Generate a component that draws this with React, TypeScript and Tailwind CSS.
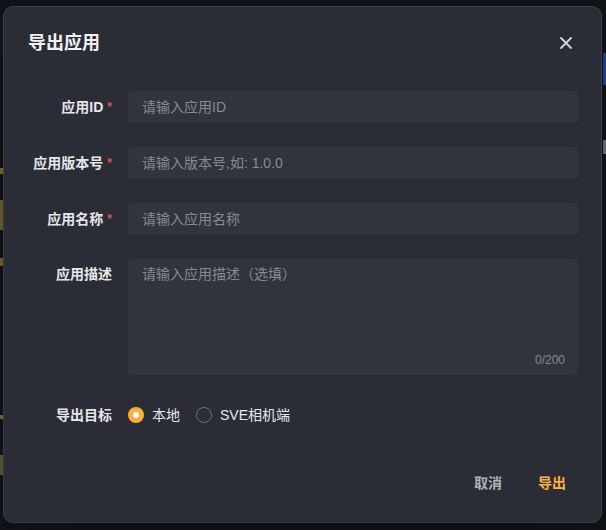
import { useState } from "react";

const font = { fontFamily: '"Liberation Sans", "Noto Sans CJK SC", sans-serif' };

function Label({ text, required }: { text: string; required?: boolean }) {
  return (
    <div className="flex w-[81px] shrink-0 items-start justify-end whitespace-nowrap text-[14px] font-bold leading-[20px] text-[#e6e7ea]">
      <span>{text}</span>
      {required && <span className="ml-[4px] pt-[2px] text-[12px] leading-[16px] text-[#e0524a]">*</span>}
    </div>
  );
}

function Field({ label, placeholder, required }: { label: string; placeholder: string; required?: boolean }) {
  return (
    <div className="flex items-center gap-4">
      <Label text={label} required={required} />
      <input
        placeholder={placeholder}
        className="h-8 w-[450px] rounded-[4px] bg-[#31343c] px-[14px] text-[14px] text-[#e6e7ea] outline-none placeholder:text-[#878a91]"
      />
    </div>
  );
}

function Radio({ checked, label, onClick }: { checked: boolean; label: string; onClick: () => void }) {
  return (
    <button type="button" onClick={onClick} className="flex items-center gap-2">
      {checked ? (
        <span className="grid h-4 w-4 place-items-center rounded-full bg-[#ffb03a]">
          <span className="h-[6px] w-[6px] rounded-full bg-white" />
        </span>
      ) : (
        <span className="h-4 w-4 rounded-full border border-[#6c6f76]" />
      )}
      <span className="text-[14px] leading-[20px] text-[#e6e7ea]">{label}</span>
    </button>
  );
}

export default function App() {
  const [target, setTarget] = useState("local");
  return (
    <div className="relative h-[530px] w-[606px] overflow-hidden bg-[#111317]" style={font}>
      {/* background slivers peeking past the dialog */}
      <div className="absolute left-0 top-[168px] h-[6px] w-[3px] bg-[#8a6420]" />
      <div className="absolute left-0 top-[200px] h-[30px] w-[3px] bg-[#6b5a2a]" />
      <div className="absolute left-0 top-[258px] h-[8px] w-[3px] bg-[#7a5a20]" />
      <div className="absolute left-0 top-[415px] h-[4px] w-[3px] bg-[#8a6420]" />
      <div className="absolute left-0 top-[455px] h-[20px] w-[3px] bg-[#5a5630]" />
      <div className="absolute right-0 top-[53px] h-[32px] w-[3px] bg-[#1e3f8f]" />
      <div className="absolute right-0 top-[140px] h-[14px] w-[3px] bg-[#6a6d72]" />

      <div className="relative ml-[3px] mt-[6px] flex h-[517px] w-[599px] flex-col rounded-[10px] border border-[#3a3e47] bg-[#2a2d35] shadow-2xl">
        <div className="flex items-center justify-between pl-[24px] pr-[29px] pt-[24px]">
          <h2 className="text-[18px] font-bold leading-[24px] text-[#f0f1f3]">导出应用</h2>
          <button type="button" aria-label="关闭" className="text-[#d4d5d8]">
            <svg width="12" height="12" viewBox="0 0 12 12" fill="none" stroke="currentColor" strokeWidth="1.8" strokeLinecap="round">
              <path d="M1 1l10 10M11 1L1 11" />
            </svg>
          </button>
        </div>

        <div className="mt-[36px] flex flex-col gap-6 pl-[27px]">
          <Field label="应用ID" placeholder="请输入应用ID" required />
          <Field label="应用版本号" placeholder="请输入版本号,如: 1.0.0" required />
          <Field label="应用名称" placeholder="请输入应用名称" required />
          <div className="flex items-start gap-4">
            <div className="pt-[5px]">
              <Label text="应用描述" />
            </div>
            <div className="relative h-[116px] w-[450px] rounded-[4px] bg-[#31343c]">
              <textarea
                placeholder="请输入应用描述（选填）"
                className="h-full w-full resize-none bg-transparent px-[14px] py-[5px] text-[14px] leading-[20px] text-[#e6e7ea] outline-none placeholder:text-[#878a91]"
              />
              <span className="absolute bottom-[6px] right-[13px] text-[12px] text-[#878a91]">0/200</span>
            </div>
          </div>
          <div className="flex h-8 items-center gap-4">
            <Label text="导出目标" />
            <div className="flex items-center gap-[16px]">
              <Radio checked={target === "local"} label="本地" onClick={() => setTarget("local")} />
              <Radio checked={target === "sve"} label="SVE相机端" onClick={() => setTarget("sve")} />
            </div>
          </div>
        </div>

        <div className="mt-auto flex justify-end gap-3 pb-[23px] pr-[23px]">
          <button type="button" className="h-8 px-3 text-[14px] font-bold text-[#aeb1b6]">取消</button>
          <button type="button" className="h-8 px-3 text-[14px] font-bold text-[#ffb03a]">导出</button>
        </div>
      </div>
    </div>
  );
}
